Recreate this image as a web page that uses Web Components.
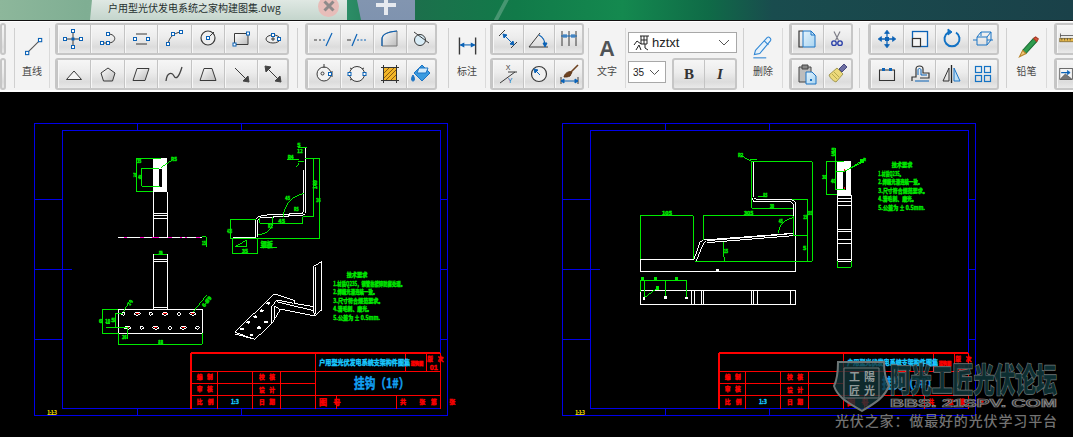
<!DOCTYPE html>
<html lang="zh">
<head>
<meta charset="utf-8">
<title>户用型光伏发电系统之家构建图集.dwg</title>
<style>
html, body { margin: 0; height: 100%; background: #000; overflow: hidden; }
</style>
</head>
<body>
<cad-app>
	<cad-tabs slot="tabs">户用型光伏发电系统之家构建图集.dwg</cad-tabs>
	<cad-ribbon slot="ribbon">
		<rb-stack style="width:6px">
			<rb-group></rb-group>
			<rb-group></rb-group>
		</rb-stack>
		<rb-tool icon="line" style="width:36px;margin-left:8px">直线</rb-tool>
		<rb-stack style="width:234px;margin-left:5px">
			<rb-group icons="axes polyarc slot arc circle rect ellipse"></rb-group>
			<rb-group icons="triangle pentagon para spline trapezoid arrow darrow"></rb-group>
		</rb-stack>
		<rb-sep style="margin-left:8px"></rb-sep>
		<rb-stack style="width:132px;margin-left:7px">
			<rb-group icons="trim extend fillet tangent"></rb-group>
			<rb-group icons="circ3 circ4 hatch bucket"></rb-group>
		</rb-stack>
		<rb-tool icon="dim" style="width:38px;margin-left:11px">标注</rb-tool>
		<rb-stack style="width:94px;margin-left:4px">
			<rb-group icons="dimalign dimangle dimmulti"></rb-group>
			<rb-group icons="dimxy dimrad dimbrush"></rb-group>
		</rb-stack>
		<rb-tool icon="bigA" style="width:38px;margin-left:4px">文字</rb-tool>
		<rb-font style="width:109px;margin-left:2px"></rb-font>
		<rb-tool icon="eraser" style="width:40px;margin-left:6px">删除</rb-tool>
		<rb-stack style="width:64px;margin-left:6px">
			<rb-group icons="copy scissors"></rb-group>
			<rb-group icons="paste brush"></rb-group>
		</rb-stack>
		<rb-sep style="margin-left:6px"></rb-sep>
		<rb-stack style="width:131px;margin-left:8px">
			<rb-group icons="move scale rotate box3d"></rb-group>
			<rb-group icons="recttop offset mirror array"></rb-group>
		</rb-stack>
		<rb-tool icon="pencil" style="width:41px;margin-left:7px">铅笔</rb-tool>
		<rb-stack style="width:40px;margin-left:7px">
			<rb-group icons="ruler image1"></rb-group>
			<rb-group icons="image2 ruler"></rb-group>
		</rb-stack>
	</cad-ribbon>
	<cad-canvas slot="canvas"></cad-canvas>
	<cad-watermark slot="canvas"></cad-watermark>
</cad-app>

<script>
(function() {
	const FONT = '"Noto Sans CJK SC", "Noto Sans", sans-serif';
	const BLUE = "#0b62b6";
	const DARK = "#3a3a3a";

	// small blue grip used by most of the drawing icons
	const s = (x, y) => `<rect x="${x - 1.5}" y="${y - 1.5}" width="3" height="3" fill="#fff" stroke="${BLUE}"/>`;
	const d = (path, stroke, extra) => `<path d="${path}" fill="none" stroke="${stroke || DARK}" ${extra || ""}/>`;
	const f = (path, fill, stroke) => `<path d="${path}" fill="${fill}" stroke="${stroke || DARK}"/>`;
	const shrink = (k, inner) => `<g transform="translate(${13 - 13 * k} ${13 - 13 * k}) scale(${k})">${inner}</g>`;

	const ICONS = {
		line: d("M9 19L20 8", "#555") + s(8.5, 19.5) + s(20.5, 7.5),
		axes: d("M12 5V21M4 13H20") + s(12, 5) + s(12, 21) + s(4, 13) + s(20, 13) + `<rect x="10.5" y="11.5" width="3" height="3" fill="${BLUE}"/>`,
		polyarc: d("M7 17H13C22 17 22 8 13 8") + s(7, 17) + s(13, 17) + s(13, 8),
		slot: d("M8 8H19M8 18H19") + s(7, 13) + s(20, 13),
		arc: d("M7 18C8 12 12 7 20 6") + s(7, 18) + s(12, 8) + s(20, 6),
		circle: `<circle cx="13" cy="12" r="7" fill="#eee" stroke="${DARK}" stroke-width="1.2"/>` + d("M13 12L19 6") + s(13, 12),
		rect: f("M6.5 7.5H20V18.5H6.5Z", "url(#g)") + s(6.5, 18.5) + s(20, 7.5),
		ellipse: `<ellipse cx="13" cy="13" rx="7" ry="4" fill="#eee" stroke="${DARK}"/>` + d("M11 13H15M13 11V15") + s(13, 9) + s(19, 13),
		triangle: f("M5.5 18.5H20.5L13 10Z", "#f4f4f4"),
		pentagon: f("M13 7L20 12L17.5 20H8.5L6 12Z", "url(#g)"),
		para: f("M5 19.5H17L21 7.5H9Z", "url(#g)"),
		spline: d("M5 20C6 11 11 11 13 15S18 16 21 6", "#444", 'stroke-width="1.3"'),
		trapezoid: f("M5 19.5H21L17 7.5H9Z", "url(#g)"),
		arrow: d("M7 7L20 20") + f("M21 21L20 15L15 20Z", "#444", "#444"),
		darrow: d("M7 7L20 20") + f("M21 21L20 15L15 20Z", "#444", "#444") + f("M5 5L6 11L11 6Z", "#444", "#444"),
		trim: d("M3 14H6M8 14H10", DARK) + d("M12 14H14", BLUE) + d("M15 20L21 7", BLUE, 'stroke-width="1.2"'),
		extend: d("M3 14H7", DARK) + d("M8 20L13 8", BLUE, 'stroke-width="1.2"') + d("M13 14H23", BLUE, 'stroke-dasharray="2 1.5"'),
		fillet: f("M5 20V13C5 8 10 6 20 5V20Z", "url(#g)", "#777") + d("M5 20V13C5 8 10 6 20 5", BLUE, 'stroke-width="1.2"') ,
		tangent: `<circle cx="12" cy="14" r="5.5" fill="#d8ecf6" stroke="${DARK}"/>` + d("M6 6L21 17"),
		circ3: `<circle cx="13" cy="13" r="7" fill="#f2f2f2" stroke="${DARK}"/><circle cx="11.5" cy="12.5" r="1.5" fill="none" stroke="${DARK}"/>` + d("M13 3V7M21 10V16") + s(19, 13),
		circ4: `<circle cx="13" cy="13" r="7.5" fill="#f2f2f2" stroke="${DARK}"/>` + d("M6 7L8 8M6 19L8 18M20 7L18 8") + s(5.5, 13) + s(20.5, 13),
		hatch: `<rect x="6.5" y="6.5" width="13" height="13" fill="#f2b526"/>` + d("M7 12L12 7M7 17L17 7M9 19L19 9M14 19L19 14", "#8a5b12") + d("M4 6.5H22M4 19.5H22M6.5 4V22M19.5 4V22", "#333"),
		bucket: f("M14 4L22 12L14 20L6 12Z", "#3a9be0", "#1d74c4") + f("M11 7L20 7L18 12L9 12Z", "#d4ecfb", "#1d74c4") + f("M5 14C3 17 3 20 5 20C7 20 7 17 5 14Z", "#1d74c4", "#1d74c4"),
		dim: d("M6 5V21M21 5V21", DARK, 'stroke-width="1.3"') + d("M7 12H20", BLUE) + f("M7 12L10 10.500V13.500Z", BLUE, BLUE) + f("M20 12L17 10.500V13.500Z", BLUE, BLUE),
		dimalign: d("M4 10L10 4M16 22L22 16", DARK) + d("M9 9L18 18", BLUE) + f("M8 8L12 9L9 12Z", BLUE, BLUE) + f("M19 19L15 18L18 15Z", BLUE, BLUE),
		dimangle: d("M3 21H22M3 21L14 7", DARK) + d("M13 9C17 11 19 15 19 20", BLUE, 'stroke-width="1.2"') + f("M19 21L17 17H21Z", BLUE, BLUE),
		dimmulti: d("M6 5V20M13 5V20M20 5V20", DARK) + d("M5 10H21", BLUE) + d("M8 8V12M10 8V12M16 8V12M18 8V12", BLUE),
		dimxy: d("M5 22L20 11M13 11H22", DARK) + `<text x="13" y="9" font-size="7" text-anchor="middle" fill="${DARK}" font-family="Liberation Sans">X</text><text x="15" y="22" font-size="7" text-anchor="middle" fill="${BLUE}" font-family="Liberation Sans">Y</text>`,
		dimrad: `<circle cx="13" cy="13" r="7.5" fill="#f0f0f0" stroke="${DARK}" stroke-width="1.2"/>` + d("M9 9L14 14", BLUE) + f("M8 8L12 9L9 12Z", BLUE, BLUE),
		dimbrush: d("M5 16V23M22 16V23") + d("M5 20H22", BLUE) + f("M5 20L8 18V22Z", BLUE, BLUE) + f("M22 20L19 18V22Z", BLUE, BLUE) + f("M8 16C9 11 14 10 16 11L14 15C12 16 10 16 8 16Z", "#6e4220", "#5a3418") + d("M15 11L22 4", "#6e4220", 'stroke-width="1.6"'),
		bigA: `<text x="13" y="22.500" font-size="20" font-weight="700" text-anchor="middle" fill="#4f5356" font-family="Liberation Sans">A</text>`,
		eraser: f("M6 17L17 5C18.5 4 21 6 20 8L10 20L5 21Z", "#e6f2fb", "#2f86d4") + d("M4 24H16", "#2f86d4") + d("M14 8L18 12", "#2f86d4"),
		copy: d("M9 5H5V21H9", "#333", 'stroke-width="1.2"') + f("M9 5H17L21 9V21H9Z", "url(#gb)", "#1d74c4") + d("M17 5V9H21", "#1d74c4"),
		scissors: shrink(.75, d("M9 3L15 15M17 3L11 15", "#7e7e88", 'stroke-width="1.6"') + `<circle cx="9" cy="18.5" r="3" fill="none" stroke="#2a3fa8" stroke-width="1.8"/><circle cx="17" cy="18.5" r="3" fill="none" stroke="#2a3fa8" stroke-width="1.8"/>`),
		paste: f("M5 6H17V21H5Z", "#bdbdbd", "#444") + f("M8 4H14V8H8Z", "#888", "#444") + f("M12 11H18L22 15V23H12Z", "url(#gb)", "#1d74c4") + `<rect x="16" y="18" width="2" height="2" fill="#1d74c4"/>`,
		brush: f("M5 14L13 7L19 13L12 21C9 20 6 17 5 14Z", "#ecd97a", "#a39a55") + d("M8 13L13 18M10 11L15 16", "#b8a94e") + f("M15 8L20 3L23 6L18 11Z", "#6d6ea3", "#4a4b80"),
		move: shrink(.8, d("M13 4V22M4 13H22", BLUE, 'stroke-width="1.6"') + `<rect x="10.5" y="10.5" width="5" height="5" fill="${BLUE}"/>` + f("M13 2L10 6H16Z", BLUE, BLUE) + f("M13 24L10 20H16Z", BLUE, BLUE) + f("M2 13L6 10V16Z", BLUE, BLUE) + f("M24 13L20 10V16Z", BLUE, BLUE)),
		scale: `<rect x="5.5" y="5.5" width="15" height="15" fill="#f4f4f4" stroke="${BLUE}" stroke-width="1.3"/><rect x="5.5" y="12.5" width="8" height="8" fill="#f4f4f4" stroke="#333" stroke-width="1.2"/>`,
		rotate: d("M17 6.5A7.5 7.5 0 1 1 9 6.5", "#1372c4", 'stroke-width="2"') + f("M9 3L13 6L9 9Z", "#1372c4", "#1372c4"),
		box3d: d("M7 11H17V19H7ZM7 11L11 6H21L17 11M21 6V14L17 19M3 14H7M17 14H23M11 6V10", "#1b74c4"),
		recttop: d("M5.5 9H20.5V19.5H5.5Z", "#333", 'stroke-width="1.1"') + `<rect x="8" y="7" width="3" height="3" fill="${BLUE}"/><rect x="15" y="7" width="3" height="3" fill="${BLUE}"/>`,
		offset: d("M5 20V16H9V8C9 4 16 4 16 8V12H22V17H13", "#333", 'stroke-width="1.2"') + d("M8 20H22M11 14V9C11 7 14 7 14 9V14H20", BLUE),
		mirror: f("M10 7V20H4Z", "none", "#333") + d("M12.5 4V22", "#222", 'stroke-width="1.3"') + f("M15 7V20H21Z", "#bfe0f6", "#1d74c4"),
		array: `<g fill="none" stroke="#1372c4" stroke-width="1.2"><rect x="5.5" y="5.5" width="6" height="6"/><rect x="14.5" y="5.5" width="6" height="6"/><rect x="5.5" y="14.5" width="6" height="6"/><rect x="14.5" y="14.5" width="6" height="6"/></g>`,
		pencil: f("M9 17L19 6C20.5 5 23 7 22 9L12 20Z", "#2f9c4e", "#1d6f36") + f("M19 6L22 9L23.5 6.5L21 4.5Z", "#d6563c", "#a83c26") + f("M9 17L12 20L6 23Z", "#f1c67a", "#b8862c"),
		ruler: `<rect x="4" y="12" width="20" height="5" fill="#e8b94a" stroke="#6b5a2a"/>` + d("M7 12V15M11 12V15M15 12V15M19 12V15M5 5V11M5 8H24", "#333"),
		image1: `<rect x="4" y="6" width="18" height="14" fill="#d8ecf6" stroke="#333"/>` + d("M6 14L12 9L20 16", BLUE),
		image2: `<rect x="4" y="5" width="18" height="16" fill="#f4f4f4" stroke="#333"/>` + f("M5 20L12 13L21 20Z", "#777", "#555") + d("M6 11H16", BLUE, 'stroke-width="2"') + f("M19 11L15 8V14Z", BLUE, BLUE)
	};

	const svgIcon = (name, size) => `<svg width="${size}" height="${size}" viewBox="0 0 26 26">
		<defs>
			<linearGradient id="g" x1="0" y1="0" x2="1" y2="1"><stop offset="0" stop-color="#fff"/><stop offset="1" stop-color="#bbb"/></linearGradient>
			<linearGradient id="gb" x1="0" y1="0" x2="1" y2="1"><stop offset="0" stop-color="#e4f3fc"/><stop offset="1" stop-color="#a9d4f0"/></linearGradient>
		</defs>${ICONS[name] || ""}</svg>`;

	class CadApp extends HTMLElement {
		constructor() {
			super();
			this.attachShadow({mode: "open"}).innerHTML = `
				<style>
				:host { display: block; width: 1073px; height: 437px; background: #000; overflow: hidden; font-family: ${FONT}; }
				.canvas { display: block; position: relative; height: 345px; }
				</style>
				<slot name="tabs"></slot>
				<slot name="ribbon"></slot>
				<div class="canvas"><slot name="canvas"></slot></div>
			`;
		}
	}

	class CadTabs extends HTMLElement {
		constructor() {
			super();
			this.attachShadow({mode: "open"}).innerHTML = `
				<style>
				:host {
					display: flex; height: 21px; box-sizing: border-box; overflow: hidden;
					border-bottom: 1px solid #111;
					background:
						linear-gradient(118deg, transparent 0 46.5%, rgba(255,255,255,.22) 46.6% 46.9%, transparent 47% 100%),
						linear-gradient(90deg, #8db79b 0, #7fae93 8%, #8cb7a0 27%, #2d8f68 32%, #1d6f4c 38%, #117a49 48%, #14894f 58%, #0f6b47 66%, #194c4e 72%, #1a4149 100%);
				}
				.tab {
					margin-left: 90px; width: 257px; height: 20px; box-sizing: border-box; padding: 0 0 4px 18px;
					display: flex; align-items: center; justify-content: space-between;
					background: linear-gradient(#dfe8e3, #c4d5cc);
					clip-path: polygon(2px 0, 100% 0, 100% 100%, 0 100%);
					color: #26302f; font-size: 10px; line-height: 14px; white-space: nowrap;
				}
				.close {
					width: 21px; height: 21px; border-radius: 50%; margin: 0 8px 0 0; flex: none;
					background: #e7bdb9; display: flex; align-items: center; justify-content: center; transform: translateY(-2px);
				}
				.plus {
					margin-left: 10px; width: 58px; height: 20px; background: linear-gradient(#8295b0, #7f93af);
					display: flex; justify-content: center;
					clip-path: polygon(0 0, 100% 0, 100% 100%, 4px 100%);
				}
				</style>
				<div class="tab"><span><slot></slot></span>
					<span class="close"><svg width="12" height="12" viewBox="0 0 12 12"><path d="M1.5 1.5L10.5 10.5M10.5 1.5L1.5 10.5" stroke="#8e8a8a" stroke-width="3"/></svg></span>
				</div>
				<div class="plus"><svg width="20" height="16" viewBox="0 0 20 16"><path d="M10 0V15M0 5H20" stroke="#e6e9ef" stroke-width="4"/></svg></div>
			`;
		}
	}

	class CadRibbon extends HTMLElement {
		constructor() {
			super();
			this.attachShadow({mode: "open"}).innerHTML = `
				<style>
				:host {
					display: flex; height: 71px; box-sizing: border-box; padding-top: 1px; overflow: hidden;
					background: #f3f3f3; border-top: 1px solid #fff; border-bottom: 2px solid #fff;
				}
				</style>
				<slot></slot>
			`;
		}
	}

	class RbStack extends HTMLElement {
		constructor() {
			super();
			this.attachShadow({mode: "open"}).innerHTML = `
				<style>:host { display: flex; flex-direction: column; gap: 3px; flex: none; box-sizing: border-box; }</style>
				<slot></slot>
			`;
		}
	}

	class RbGroup extends HTMLElement {
		constructor() {
			super();
			const names = (this.getAttribute("icons") || "").split(" ").filter(Boolean);
			this.attachShadow({mode: "open"}).innerHTML = `
				<style>
				:host {
					display: flex; height: 32px; box-sizing: border-box;
					border: 2px solid #c6c6c6; border-radius: 3px; overflow: hidden;
					background: linear-gradient(#f6f6f6, #ececec 45%, #dcdcdc 78%, #e9e9e9);
				}
				.b { flex: 1 1 0; min-width: 0; display: flex; align-items: center; justify-content: center; border-left: 1px solid #c4c4c4; box-shadow: inset 1px 0 #f7f7f7; }
				.b:first-child { border-left: 0; box-shadow: none; flex-grow: .88; }
				.b:last-child { flex-grow: .88; }
				</style>
				${names.map(n => `<div class="b">${svgIcon(n, 26)}</div>`).join("")}
			`;
		}
	}

	class RbSep extends HTMLElement {
		constructor() {
			super();
			this.attachShadow({mode: "open"}).innerHTML = `
				<style>:host { display: block; flex: none; width: 1px; height: 60px; margin-top: 5px; background: #d0d0d0; }</style>
			`;
		}
	}

	class RbTool extends HTMLElement {
		constructor() {
			super();
			this.attachShadow({mode: "open"}).innerHTML = `
				<style>
				:host {
					display: flex; flex-direction: column; align-items: center; flex: none; box-sizing: border-box;
					height: 60px; margin-top: 5px; padding-top: 4px; gap: 4px;
					border-left: 1px solid #d0d0d0; border-right: 1px solid #dadada;
					color: #454545; font-size: 10px; line-height: 14px;
				}
				svg { display: block; }
				</style>
				${svgIcon(this.getAttribute("icon"), 28)}
				<span><slot></slot></span>
			`;
		}
	}

	class RbFont extends HTMLElement {
		constructor() {
			super();
			this.attachShadow({mode: "open"}).innerHTML = `
				<style>
				:host { display: flex; flex-direction: column; flex: none; gap: 5px; font-family: "Liberation Sans", sans-serif; color: #222; padding-top: 9px; box-sizing: border-box; }
				.box { display: flex; align-items: center; background: #fff; border: 1px solid #a8a8a8; box-sizing: border-box; }
				.name { height: 21px; font-size: 13px; padding: 0 6px 0 4px; }
				.name svg:first-child { margin-right: 1px; }
				.name span { flex: 1; }
				.row { display: flex; gap: 6px; }
				.size { width: 38px; height: 22px; margin-top: 3px; font-size: 10px; padding: 0 5px 0 4px; justify-content: space-between; }
				.st { flex: 1; height: 32px; box-sizing: border-box; border: 2px solid #c6c6c6; border-radius: 3px; display: flex; background: linear-gradient(#f6f6f6, #ececec 45%, #dcdcdc 78%, #e9e9e9); }
				.st b, .st i { flex: 1; display: flex; align-items: center; justify-content: center; font: 700 15px "Liberation Serif", serif; color: #333; }
				.st i { font-style: italic; border-left: 1px solid #c4c4c4; }
				</style>
				<div class="box name">
					<svg width="18" height="16" viewBox="0 0 18 16" fill="none" stroke="#222"><path d="M7 1H16M8 1V9H14M11 1V9M14 1V9M8 5H14M8 9L4 6L1 10M3 15L6 10L8 15M12 9V13L15 15"/></svg>
					<span>hztxt</span>
					<svg width="12" height="8" viewBox="0 0 12 8" fill="none" stroke="#555"><path d="M1 1L6 6L11 1"/></svg>
				</div>
				<div class="row">
					<div class="box size"><span>35</span><svg width="11" height="7" viewBox="0 0 11 7" fill="none" stroke="#555"><path d="M1 1L5.500 5.500L10 1"/></svg></div>
					<div class="st"><b>B</b><i>I</i></div>
				</div>
			`;
		}
	}

	// ---- drawing helpers, coordinates are those of 3x crops so they stay readable
	const G = "#00ea00", W = "#fff", R = "#f00", B = "#0000e8", C = "#19c8ff", M = "#ff00c8";
	const p = (c, path, w) => `<path d="${path}" fill="none" stroke="${c}" stroke-width="${w || 3}"/>`;
	// CAD text is heavy at this size, a thin stroke of its own colour gets closer
	const t = (x, y, str, c, size, len, extra) =>
		`<text x="${x}" y="${y}" fill="${c}" stroke="${c}" stroke-width="1.2" font-size="${size}" font-weight="700"${len ? ` textLength="${len}" lengthAdjust="${/[\u4e00-\u9fff] [\u4e00-\u9fff]/.test(str) ? "spacing" : "spacingAndGlyphs"}"` : ""} ${extra || ""}>${str}</text>`;
	const at = (x, y, inner) => `<g transform="translate(${x} ${y}) scale(0.33333)">${inner}</g>`;

	function sheet(dx, titleText) {
		const frame = `
			<path d="M34.500 123.500H447.500V415.500H34.500ZM137.500 123V130M241.500 123V130M137.500 408V415M241.500 408V415M34 199.500H62M34 269.500H72M34 339.500H62M440 199.500H447M440 269.500H447M440 339.500H447"
				fill="none" stroke="${B}"/>
			<path d="M62.500 130.500H440.500V408.500H62.500Z" fill="none" stroke="${B}" stroke-width="1.400"/>
			<text x="47" y="415" fill="#ffe400" font-size="5.500" font-weight="700" textLength="10">1:1:3</text>`;
		const block = at(180, 260, `
			${p(R, "M32 279H781", 6)}${p(R, "M32 279V446", 6)}
			${p(R, "M30 334H781M30 370H407M30 408H781M113 334V446M217 334V446M302 334V446M407 278V446M676 278V334M740 278V334M650 408V446M781 278V446")}
			${p(R, "M470 408V446", 3)}
			${t(418, 316, "户用型光伏发电系统支架构件图集", C, 20, 272)}
			${t(692, 316, "挂钩图", R, 14, 38)}
			${t(742, 304, "版 次", R, 17, 48)}
			${t(749, 330, "01", R, 22, 24, 'font-family="Liberation Sans"')}
			${t(522, 385, titleText, "#12a0f5", 40, 166)}
			${t(50, 358, "编 制", R, 17, 48)}${t(50, 394, "审 核", R, 17, 48)}${t(50, 433, "比 例", R, 17, 50)}
			${t(153, 432, "1:3", C, 18, 24)}
			${t(237, 358, "校 核", R, 17, 48)}${t(237, 396, "设 计", R, 17, 48)}${t(237, 433, "日 期", R, 17, 48)}
			${t(417, 434, "图", R, 24, 24)}${t(460, 434, "号", R, 22, 22)}
			${t(660, 433, "共", R, 18, 18)}${t(718, 433, "张", R, 18, 18)}${t(752, 433, "第", R, 18, 18)}${t(808, 433, "张", R, 18, 18)}
		`);
		return `<g transform="translate(${dx} 0)">${frame}${block}</g>`;
	}

	const tech = (x, y, heading, lines, lens) => `
		${t(x + 40, y, heading, G, 18, 62)}
		${lines.map((l, i) => t(x, y + 28 + i * 25.500, l, G, 18, lens[i])).join("")}`;

	const part1 = at(30, 120, `
		<rect x="370" y="115" width="42" height="100" fill="#fff"/>
		<rect x="387" y="148" width="9" height="52" fill="#000"/>
		${p(W, "M370 215V354M412 215V354M370 281H412M370 287H412M370 296H412")}
		${p(W, "M264 353H516", 5)}
		${p(M, "M282 353H290M330 353H342M366 353H386M414 353H426M450 353H456M464 353H470M498 353H510", 4)}
		${p(G, "M392 115H319V215H370M335 145H387M335 145V199H390M394 142L430 118M516 350H529V380")}
		${t(322, 130, "35", G, 13, 12)}${t(310, 170, "70", G, 13, 10)}${t(325, 178, "40", G, 13, 10)}${t(423, 124, "R5", G, 16, 18)}${t(516, 376, "15", G, 14, 12)}
		${p(W, "M826 82V280L818 287H780L778 284H715L684 290L677 300V352M820 150V275L815 282H778L776 289H730V293H690L683 300V352")}
		${p(W, "M608 353H678", 5)}
		${p(G, "M601 298H678M601 298V355H869V115H826M851 115V289H820M690 293V310H818V290M727 292V310M760 290C762 255 785 228 822 220M685 343C705 343 725 332 728 310M607 355V401H683V355M616 380H650V360ZM803 82H830M771 118H808M805 125H822M800 140L808 128M690 382H740")}
		${t(802, 80, "5", G, 14, 10)}${t(802, 100, "12", G, 15, 16)}${t(773, 118, "R4", G, 14, 18)}${t(858, 246, "16", G, 15, 14)}${t(842, 212, "149", G, 15, 28, 'transform="rotate(-90 850 200)"')}
		${t(766, 240, "45", G, 14, 14)}${t(792, 272, "R5", G, 14, 14)}${t(745, 308, "45", G, 15, 20)}${t(714, 324, "R2", G, 14, 14)}${t(592, 340, "415", G, 15, 14)}${t(636, 398, "35", G, 14, 18)}${t(692, 380, "钢板", G, 20, 36)}
		${p(G, "M370 403H412")}${t(386, 401, "5", G, 12, 12)}
		${p(W, "M370 403V480M412 403V480M370 418H412M370 424H412")}
	`);

	const holes = (list, y) => list.map(([x, rx]) =>
		`<ellipse cx="${x}" cy="${y}" rx="${rx}" ry="4.500" fill="#000" stroke="#fff" stroke-width="3"/>` +
		(rx > 6 ? `<rect x="${x - 5}" y="${y - 2}" width="10" height="3" fill="${R}"/>` : "")).join("");

	const part1b = at(30, 270, `
		${p(W, "M370 0V118M412 0V118M370 112H412")}
		${p(W, "M265 118H517V190H265Z")}
		${holes([[280, 5], [322, 9], [362, 5], [405, 9], [447, 5], [488, 9]], 131)}
		${holes([[293, 10], [335, 5], [377, 9], [420, 5], [460, 9], [502, 6]], 173)}
		${p(G, "M265 118H217V190H265M256 130V172M256 130H280M228 172H293V208M265 190V223H517V190M280 127L300 90M490 125L530 75M228 160H240")}
		${t(207, 158, "6", G, 14, 10)}${t(226, 158, "10", G, 14, 14)}${t(244, 156, "5", G, 14, 12)}${t(276, 208, "26", G, 14, 14)}${t(385, 222, "88", G, 14, 14)}${t(292, 105, "2-9", G, 14, 16, 'transform="rotate(-55 298 98)"')}${t(505, 105, "6-Ø9", G, 15, 36, 'transform="rotate(-52 522 90)"')}
	`);

	const iso = at(180, 260, `
		${p(W, "M165 217L275 108L285 102L345 122L342 130L400 140V20L425 5V150L403 168L315 150L300 150L277 188L225 238L165 217")}
		${p(W, "M165 222L225 238M407 22V158L403 168M275 140V190M275 140L290 120L340 130M285 138L300 150M285 138V178M400 140L403 168M290 125L400 152")}
		${[[265, 130], [245, 152], [226, 170], [205, 187], [186, 207], [237, 203], [215, 225]].map(([x, y]) =>
			`<ellipse cx="${x}" cy="${y}" rx="6" ry="4" fill="#fff"/>`).join("")}
		<rect x="251" y="183" width="12" height="5" fill="#fff"/>
		${tech(460, 50, "技术要求", ["1.材质Q235，钢管热镀锌防腐处理。", "2.焊缝光滑连续一致。", "3.尺寸符合规范要求。", "4.清毛刺、磨光。", "5.公差为 ± 0.5mm."], [215, 132, 150, 116, 140])}
	`);

	const part2 = at(560, 120, `
		${p(W, "M575 130V222", 3)}
		${p(W, "M581 125V232L588 238H695L707 248V455H241V420H402M575 230L581 246H692L700 253V340L640 346L440 362L430 372L408 424M402 418L420 366L430 360L700 340")}
		${p(W, "M243 418H402M440 368L700 347", 3)}
		<rect x="469" y="447" width="8" height="6" fill="#fff"/>
		${p(G, "M575 125H757V424H405M575 125V265H700M695 238H743V424M241 418V287H400V418M430 360V287H700V346H743M655 340C658 315 672 298 700 293M490 365V410M493 412V424M595 230H620M542 106L575 125M570 118H590")}
		${t(306, 285, "105", G, 15, 30)}${t(552, 285, "305", G, 15, 28)}${t(744, 286, "385", G, 15, 12)}${t(630, 264, "30", G, 14, 12)}${t(610, 232, "R5", G, 15, 12)}${t(534, 110, "R2", G, 15, 16)}${t(656, 310, "45", G, 15, 12)}${t(730, 298, "15", G, 14, 12)}${t(729, 390, "5", G, 14, 10)}${t(492, 400, "15", G, 13, 12)}
		${p(W, "M241 511H707V554H241ZM395 511V554M403 511V554M424 511V554M431 511V554M574 511V554M581 511V554M592 511V554M693 511V554")}
		${p(G, "M241 515V482H380V532M253 482V532M316 482V532M250 535L298 500")}
		<rect x="243" y="472" width="9" height="9" fill="${G}"/><rect x="281" y="472" width="10" height="9" fill="${G}"/><rect x="344" y="472" width="10" height="9" fill="${G}"/><rect x="288" y="498" width="10" height="12" fill="${G}"/>
		<rect x="250" y="531" width="6" height="8" fill="#fff"/><rect x="313" y="529" width="7" height="8" fill="#fff"/><rect x="376" y="530" width="7" height="8" fill="#fff"/>
		<rect x="832" y="124" width="42" height="100" fill="#fff"/>
		<rect x="850" y="152" width="8" height="58" fill="#000"/>
		<rect x="851" y="148" width="5" height="7" fill="${R}"/><rect x="851" y="202" width="5" height="7" fill="${R}"/>
		${p(W, "M832 224V424M874 224V424M832 226H874M832 237H874M832 245H874M832 257H874M832 328H874M832 334H874M832 360H874M832 370H874M832 418H874M832 424H874")}
		${p(G, "M852 124H799V223H832M826 85V208H855M826 155H850M850 155L905 128M832 424V442H874V424")}
		${t(814, 95, "5", G, 16, 12)}${t(814, 108, "5", G, 15, 12)}${t(787, 178, "30", G, 14, 12)}${t(813, 188, "40", G, 15, 14)}
	`);

	const part2b = at(820, 130, `
		${p(G, "M85 118L122 95")}
		<rect x="120" y="88" width="12" height="10" fill="${G}"/>${t(130, 92, "R", G, 12, 8)}
		${tech(175, 110, "技术要求", ["1.材质Q235。", "2.焊缝光滑连续一致。", "3.尺寸符合规范要求。", "4.清毛刺、磨光。", "5.公差为 ± 0.5mm."], [75, 132, 148, 115, 140])}
	`);

	class CadCanvas extends HTMLElement {
		constructor() {
			super();
			this.attachShadow({mode: "open"}).innerHTML = `
				<style>:host { display: block; width: 1073px; height: 345px; background: #000; } svg { display: block; font-family: ${FONT}; }</style>
				<svg width="1073" height="345" viewBox="0 92 1073 345" shape-rendering="crispEdges">
					${sheet(0, "挂钩（1#）")}
					${sheet(528, "挂钩（3#）")}
					${part1}${part1b}${iso}${part2}${part2b}
				</svg>
			`;
		}
	}

	class CadWatermark extends HTMLElement {
		constructor() {
			super();
			this.attachShadow({mode: "open"}).innerHTML = `
				<style>
				:host { display: block; position: absolute; left: 830px; top: 260px; width: 243px; height: 85px; pointer-events: none; }
				svg { display: block; font-family: ${FONT}; }
				</style>
				<svg width="243" height="85" viewBox="830 352 243 85">
					<path d="M838 362H884C884 372 886 380 889 386C884 398 875 403 862 411C849 403 838 398 834 386C837 380 838 372 838 362Z" fill="rgba(18,52,56,.78)" stroke="#6d7676" stroke-width="2"/>
					<path d="M844 368H879V398H844Z" fill="none" stroke="#6d7676"/>
					<text x="849" y="381" font-size="11" font-weight="700" fill="#8f9999" textLength="26">工 陽</text>
					<text x="849" y="395" font-size="11" font-weight="700" fill="#8f9999" textLength="26">匠 光</text>
					<g transform="translate(890 392) scale(1 1.550)" font-weight="900" stroke-width=".9" paint-order="stroke">
						<text x="0" y="0" font-size="21" textLength="167" lengthAdjust="spacingAndGlyphs" fill="rgba(14,50,54,.92)" stroke="#6f7878">阿光工匠光伏论坛</text>
					</g>
					<text x="890" y="407" font-size="11" font-weight="700" textLength="167" lengthAdjust="spacingAndGlyphs" font-family="Liberation Sans" fill="#2c2c2c" stroke="#848484" stroke-width=".7">BBS. 21SPV. COM</text>
					<text x="835" y="426" font-size="14" font-weight="500" textLength="222" fill="#727272">光伏之家：做最好的光伏学习平台</text>
				</svg>
			`;
		}
	}

	customElements.define("cad-app", CadApp);
	customElements.define("cad-tabs", CadTabs);
	customElements.define("cad-ribbon", CadRibbon);
	customElements.define("rb-stack", RbStack);
	customElements.define("rb-group", RbGroup);
	customElements.define("rb-sep", RbSep);
	customElements.define("rb-tool", RbTool);
	customElements.define("rb-font", RbFont);
	customElements.define("cad-canvas", CadCanvas);
	customElements.define("cad-watermark", CadWatermark);
})();
</script>
</body>
</html>
